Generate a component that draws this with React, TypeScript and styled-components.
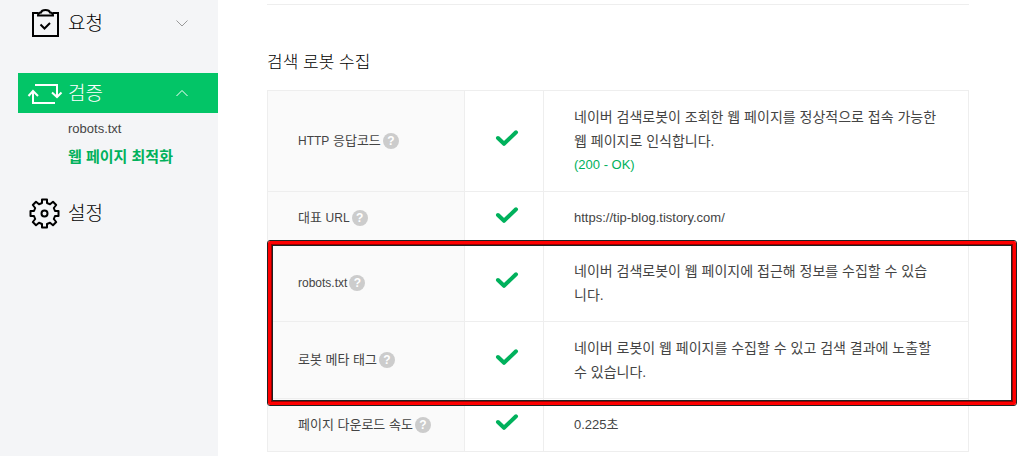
import React from 'react';
import styled, { createGlobalStyle } from 'styled-components';

const GlobalStyle = createGlobalStyle`
  *, *::before, *::after { box-sizing: border-box; }
  body {
    margin: 0;
    background: #fff;
    color: #444;
    font-family: "Liberation Sans", "Noto Sans CJK KR", sans-serif;
    font-size: 13px;
    font-weight: 400;
    overflow: hidden;
  }
  a { color: inherit; text-decoration: none; }
`;

const Page = styled.div`
  display: flex;
  min-height: 100vh;
`;

const Sidebar = styled.nav`
  flex: none;
  width: 218px;
  padding: 3px 0 0 18px;
  background: #f4f5f7;
`;

const MenuGroup = styled.section<{ $gap: number }>`
  margin-bottom: ${(p) => p.$gap}px;
`;

const MenuButton = styled.button<{ $active?: boolean }>`
  display: flex;
  align-items: center;
  gap: 5px;
  width: 100%;
  height: 40px;
  padding: 0 29px 0 9px;
  border: 0;
  background: ${(p) => (p.$active ? '#03c567' : 'transparent')};
  color: ${(p) => (p.$active ? '#fff' : '#000')};
  font: inherit;
  font-size: 19px;
  font-weight: 300;
  text-align: left;
  cursor: pointer;
`;

const MenuLabel = styled.span`
  flex: 1;
  padding-bottom: 4px;
`;

const SubMenu = styled.ul`
  margin: 0;
  padding: 2px 0 0 50px;
  list-style: none;
`;

const SubLink = styled.a<{ $current?: boolean }>`
  display: block;
  font-size: ${(p) => (p.$current ? 15 : 13)}px;
  line-height: 28px;
  color: ${(p) => (p.$current ? '#00b15c' : '#444')};
  font-weight: ${(p) => (p.$current ? 700 : 400)};
`;

const Main = styled.main`
  flex: 1;
  min-width: 0;
  padding: 4px 48px 0 49px;
`;

const Divider = styled.hr`
  height: 1px;
  margin: 0;
  border: 0;
  background: #eee;
`;

const Heading = styled.h2`
  margin: 0;
  padding: 44px 0 13px;
  font-size: 17px;
  font-weight: 300;
  line-height: 28px;
  color: #000;
`;

const TableArea = styled.div`
  position: relative;
`;

const Table = styled.table`
  width: 100%;
  border-collapse: collapse;
  table-layout: fixed;
`;

const LabelCell = styled.th`
  padding: 14px 0 14px 30px;
  border: 1px solid #eee;
  background: #fafafa;
  font-weight: 400;
  text-align: left;
`;

const LabelLine = styled.div`
  display: flex;
  align-items: center;
  gap: 2px;
  line-height: 24px;
  white-space: nowrap;
`;

const Latin = styled.span`
  font-size: 12px;
`;

const HelpButton = styled.button`
  width: 16px;
  height: 16px;
  padding: 0;
  border: 0;
  border-radius: 50%;
  background: #ccc;
  color: #fff;
  font: 700 12px/16px "Liberation Sans", sans-serif;
  text-align: center;
  cursor: pointer;
`;

const StatusCell = styled.td`
  padding: 0;
  border: 1px solid #eee;
  text-align: center;

  svg { display: block; margin: 0 auto; }
`;

const ResultCell = styled.td`
  padding: 14px 0 14px 30px;
  border: 1px solid #eee;
`;

const Message = styled.p<{ $size: number; $ok?: boolean }>`
  margin: 0;
  font-size: ${(p) => p.$size}px;
  line-height: 24px;
  white-space: nowrap;
  color: ${(p) => (p.$ok ? '#00b15c' : '#444')};
`;

const Highlight = styled.div`
  position: absolute;
  top: 150px;
  bottom: 46px;
  left: 0;
  right: -48px;
  border: 1px solid #222;
  border-radius: 3px;
  pointer-events: none;

  &::before {
    content: "";
    position: absolute;
    inset: 0;
    border: 4px solid #f00;
    border-radius: 2px;
  }

  &::after {
    content: "";
    position: absolute;
    inset: 4px;
    border: 1px solid #222;
    box-shadow: 0 0 0 1px #900;
  }
`;

const ClipboardIcon = () => (
  <svg width="36" height="32" viewBox="0 0 36 32" fill="none" stroke="currentColor" strokeWidth="2" aria-hidden="true">
    <path d="M11 6H6v23h25V6h-5" />
    <path d="M11 8.500C11 6.500 12.500 5.500 14 5.500C14.500 3.500 16 3 18.500 3S22.500 3.500 23 5.500C24.500 5.500 26 6.500 26 8.500Z" />
    <path d="M13.500 17.500l4 4 5.500-5.500" />
  </svg>
);

const CycleIcon = () => (
  <svg width="36" height="32" viewBox="0 0 36 32" fill="none" stroke="currentColor" strokeWidth="2" aria-hidden="true">
    <path d="M8 8h22v12M25 15.500l5 4.500 4.500-4.500" />
    <path d="M28 26H6V14M1.500 19L6 14l5 5" />
  </svg>
);

const GearIcon = () => (
  <svg width="36" height="32" viewBox="0 0 36 32" fill="none" stroke="currentColor" strokeWidth="2" strokeLinejoin="round" aria-hidden="true">
    <path d="M15 2.500h5v3.500l3 1.200 3-2.400 3.200 3.200-2.400 3 1.200 3h3.500v5h-3.500l-1.200 3 2.400 3-3.200 3.200-3-2.400-3 1.200v3.500h-5v-3.500l-3-1.200-3 2.400-3.200-3.200 2.400-3-1.200-3H3.500v-5h3.500l1.200-3-2.400-3L9 4.800l3 2.400 3-1.200z" />
    <circle cx="17.500" cy="16.500" r="3" />
  </svg>
);

const Chevron = ({ up }: { up?: boolean }) => (
  <svg width="14" height="10" viewBox="0 0 14 10" fill="none" stroke={up ? '#fff' : '#999'} aria-hidden="true">
    <path d={up ? 'M1.500 8L7 2.500 12.500 8' : 'M1.500 2.500L7 8l5.500-5.500'} />
  </svg>
);

const CheckIcon = () => (
  <svg width="30" height="24" viewBox="0 0 30 24" fill="none" stroke="#00b15c" strokeWidth="4" strokeLinecap="round" strokeLinejoin="round" role="img" aria-label="정상">
    <path d="M9 9l6 5.800L27 3.300" />
  </svg>
);

interface Row {
  latin?: string;
  label?: string;
  suffix?: string;
  lines: string[];
  size: number;
  status?: string;
}

const rows: Row[] = [
  {
    latin: 'HTTP',
    suffix: ' 응답코드',
    lines: ['네이버 검색로봇이 조회한 웹 페이지를 정상적으로 접속 가능한', '웹 페이지로 인식합니다.'],
    size: 14,
    status: '(200 - OK)',
  },
  { label: '대표 ', latin: 'URL', lines: ['https://tip-blog.tistory.com/'], size: 13 },
  { latin: 'robots.txt', lines: ['네이버 검색로봇이 웹 페이지에 접근해 정보를 수집할 수 있습', '니다.'], size: 14 },
  { label: '로봇 메타 태그', lines: ['네이버 로봇이 웹 페이지를 수집할 수 있고 검색 결과에 노출할', '수 있습니다.'], size: 14 },
  { label: '페이지 다운로드 속도', lines: ['0.225초'], size: 13 },
];

export default function App() {
  return (
    <>
      <GlobalStyle />
      <Page>
        <Sidebar>
          <MenuGroup $gap={30}>
            <MenuButton aria-expanded={false}>
              <ClipboardIcon />
              <MenuLabel>요청</MenuLabel>
              <Chevron />
            </MenuButton>
          </MenuGroup>
          <MenuGroup $gap={22}>
            <MenuButton $active aria-expanded>
              <CycleIcon />
              <MenuLabel>검증</MenuLabel>
              <Chevron up />
            </MenuButton>
            <SubMenu>
              <li><SubLink href="#robots">robots.txt</SubLink></li>
              <li><SubLink href="#optimize" $current>웹 페이지 최적화</SubLink></li>
            </SubMenu>
          </MenuGroup>
          <MenuGroup $gap={0}>
            <MenuButton>
              <GearIcon />
              <MenuLabel>설정</MenuLabel>
            </MenuButton>
          </MenuGroup>
        </Sidebar>
        <Main>
          <Divider />
          <Heading>검색 로봇 수집</Heading>
          <TableArea>
            <Table>
              <colgroup>
                <col style={{ width: 197 }} />
                <col style={{ width: 79 }} />
                <col />
              </colgroup>
              <tbody>
                {rows.map((row) => {
                  const name = `${row.label ?? ''}${row.latin ?? ''}${row.suffix ?? ''}`;
                  return (
                    <tr key={name}>
                      <LabelCell scope="row">
                        <LabelLine>
                          <span>
                            {row.label}
                            {row.latin && <Latin>{row.latin}</Latin>}
                            {row.suffix}
                          </span>
                          <HelpButton aria-label={`${name} 도움말`}>?</HelpButton>
                        </LabelLine>
                      </LabelCell>
                      <StatusCell><CheckIcon /></StatusCell>
                      <ResultCell>
                        {row.lines.map((line) => (
                          <Message key={line} $size={row.size}>{line}</Message>
                        ))}
                        {row.status && <Message $size={13} $ok>{row.status}</Message>}
                      </ResultCell>
                    </tr>
                  );
                })}
              </tbody>
            </Table>
            <Highlight />
          </TableArea>
        </Main>
      </Page>
    </>
  );
}
